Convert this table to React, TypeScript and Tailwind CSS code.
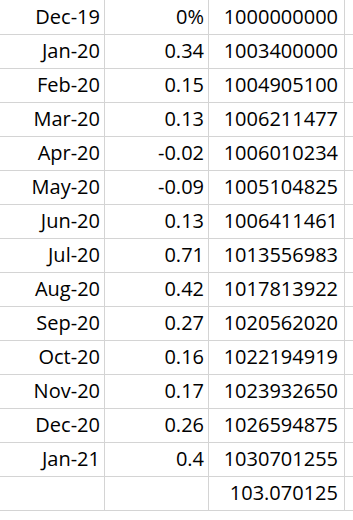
const rows: [string, string, string][] = [
  ["Dec-19", "0%", "1000000000"],
  ["Jan-20", "0.34", "1003400000"],
  ["Feb-20", "0.15", "1004905100"],
  ["Mar-20", "0.13", "1006211477"],
  ["Apr-20", "-0.02", "1006010234"],
  ["May-20", "-0.09", "1005104825"],
  ["Jun-20", "0.13", "1006411461"],
  ["Jul-20", "0.71", "1013556983"],
  ["Aug-20", "0.42", "1017813922"],
  ["Sep-20", "0.27", "1020562020"],
  ["Oct-20", "0.16", "1022194919"],
  ["Nov-20", "0.17", "1023932650"],
  ["Dec-20", "0.26", "1026594875"],
  ["Jan-21", "0.4", "1030701255"],
  ["", "", "103.070125"],
]

export default function App() {
  return (
    <div className="w-[353px] h-[520px] bg-white text-black font-['Open_Sans',sans-serif] text-[20px]">
      {rows.map((r, i) => (
        <div
          key={i}
          className={`flex border-b border-[#d4d4d4] ${i === 0 ? "h-[35px]" : "h-[34px]"}`}
        >
          <div className="w-[105px] border-r border-[#d4d4d4] flex items-end justify-end pr-[4px] pb-[2px] leading-[30px]">
            {r[0]}
          </div>
          <div className="w-[104px] border-r border-[#d4d4d4] flex items-end justify-end pr-[4px] pb-[2px] leading-[30px]">
            {r[1]}
          </div>
          <div className="w-[136px] border-r border-[#d4d4d4] flex items-end justify-end pr-[6px] pb-[2px] leading-[30px]">
            {r[2]}
          </div>
        </div>
      ))}
    </div>
  )
}
